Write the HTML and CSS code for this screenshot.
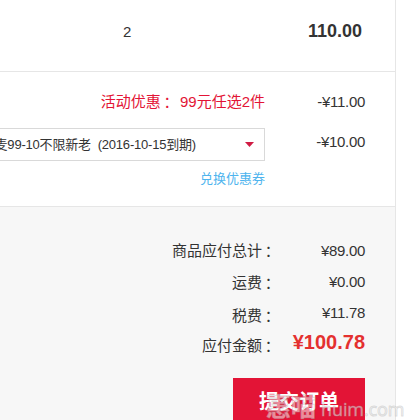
FILE: index.html
```
<!DOCTYPE html>
<html lang="zh-CN">
<head>
  <meta charset="UTF-8" />
  <title>提交订单</title>
  <link rel="stylesheet" href="styles.css">
</head>
<body>

  <div class="order">
    <div class="item-row">
      <span class="count">2</span>
      <span class="subtotal">110.00</span>
    </div>

    <div class="discount">
      <div class="discount-row promo">
        <div class="label">活动优惠<span class="colon" lang="zh-TW">：</span> 99元任选2件</div>
        <div class="price">-¥11.00</div>
      </div>
      <div class="discount-row">
        <div class="coupon">
          <div class="select">
            <span class="select-text">麦99-10不限新老&nbsp; (2016-10-15到期)</span>
            <svg class="arrow" width="9" height="5" viewBox="0 0 9 5"><path d="M0 0h9L4.5 5z" fill="#d01c44"/></svg>
          </div>
          <a class="exchange">兑换优惠券</a>
        </div>
        <div class="price">-¥10.00</div>
      </div>
    </div>

    <div class="summary">
      <div class="totals">
        <div class="names">
          <div>商品应付总计<span class="colon" lang="zh-TW">：</span></div>
          <div>运费<span class="colon" lang="zh-TW">：</span></div>
          <div class="tax">税费<span class="colon" lang="zh-TW">：</span></div>
          <div>应付金额<span class="colon" lang="zh-TW">：</span></div>
        </div>
        <div class="values">
          <div>¥89.00</div>
          <div>¥0.00</div>
          <div>¥11.78</div>
          <div class="pay">¥100.78</div>
        </div>
      </div>
      <button class="submit">提交订单</button>
    </div>
  </div>

  <div class="watermark"><span class="wm-cn">惠喵</span><span class="wm-en">huim.com</span></div>

</body>
</html>
```

FILE: styles.css
```
* {
  box-sizing: border-box;
}

body {
  margin: 0;
  height: 420px;
  overflow: hidden;
  position: relative;
  background-color: #fff;
  color: #333;
  font-family: "Liberation Sans", "Noto Sans CJK SC", sans-serif;
  font-size: 15px;
}

.order {
  width: 396px;
  height: 420px;
  border-right: 1px solid #e6e6e6;
  overflow: hidden;
}

.item-row {
  display: flex;
  justify-content: space-between;
  height: 72px;
  padding: 20px 33px 0 123px;
  border-bottom: 1px solid #e6e6e6;
  line-height: 23px;
}

.subtotal {
  font-size: 18px;
  font-weight: bold;
  line-height: 22px;
}

.colon {
  margin-left: -1px;
  margin-right: 1px;
  font-family: "Noto Sans CJK TC", sans-serif;
  line-height: 1;
  vertical-align: -1px;
}

.discount {
  height: 135px;
  padding-top: 18px;
  border-bottom: 1px solid #e6e6e6;
}

.discount-row {
  display: flex;
  justify-content: flex-end;
  padding-right: 30px;
}

.promo {
  height: 38px;
  line-height: 23px;
}

.label {
  color: #e31436;
  white-space: nowrap;
}

.price {
  flex: none;
  width: 100px;
  text-align: right;
  line-height: 27px;
  letter-spacing: -0.3px;
}

.promo .price {
  line-height: 24px;
}

.coupon {
  flex: none;
  width: 300px;
  text-align: right;
}

.select {
  display: flex;
  align-items: center;
  justify-content: flex-end;
  height: 33px;
  border: 1px solid #d9d9d9;
  padding-right: 10px;
  font-size: 13px;
}

.select-text {
  margin-right: 49px;
  padding-bottom: 2px;
  letter-spacing: -0.2px;
  white-space: nowrap;
}

.exchange {
  display: block;
  margin-top: 8px;
  color: #4eb4ee;
  font-size: 13px;
  line-height: 20px;
}

.summary {
  height: 213px;
  padding: 28px 30px 0 0;
  background-color: #f7f7f7;
}

.totals {
  display: flex;
  justify-content: flex-end;
  height: 143px;
}

.names {
  line-height: 31.5px;
  text-align: right;
}

.tax {
  padding-top: 2px;
  margin-bottom: -2px;
}

.values {
  width: 88px;
  line-height: 31px;
  text-align: right;
  letter-spacing: -0.3px;
}

.values .pay {
  color: #e4302f;
  font-size: 20px;
  font-weight: bold;
  line-height: 29px;
  letter-spacing: 0;
}

.submit {
  display: block;
  width: 132px;
  height: 46px;
  margin-left: auto;
  padding: 0 0 1px;
  border: none;
  background-color: #e31436;
  color: #fff;
  font-family: inherit;
  font-size: 20px;
  font-weight: bold;
}

.watermark {
  position: absolute;
  left: 266px;
  top: 391px;
  display: flex;
  align-items: baseline;
  line-height: 33px;
  color: rgba(255, 255, 255, 0.5);
  -webkit-text-stroke: 1px rgba(160, 160, 160, 0.35);
  white-space: nowrap;
}

.wm-cn {
  font-size: 25px;
  font-weight: bold;
}

.wm-en {
  margin-left: 5px;
  font-family: "Open Sans", sans-serif;
  font-size: 18px;
  letter-spacing: -0.1px;
}
```
